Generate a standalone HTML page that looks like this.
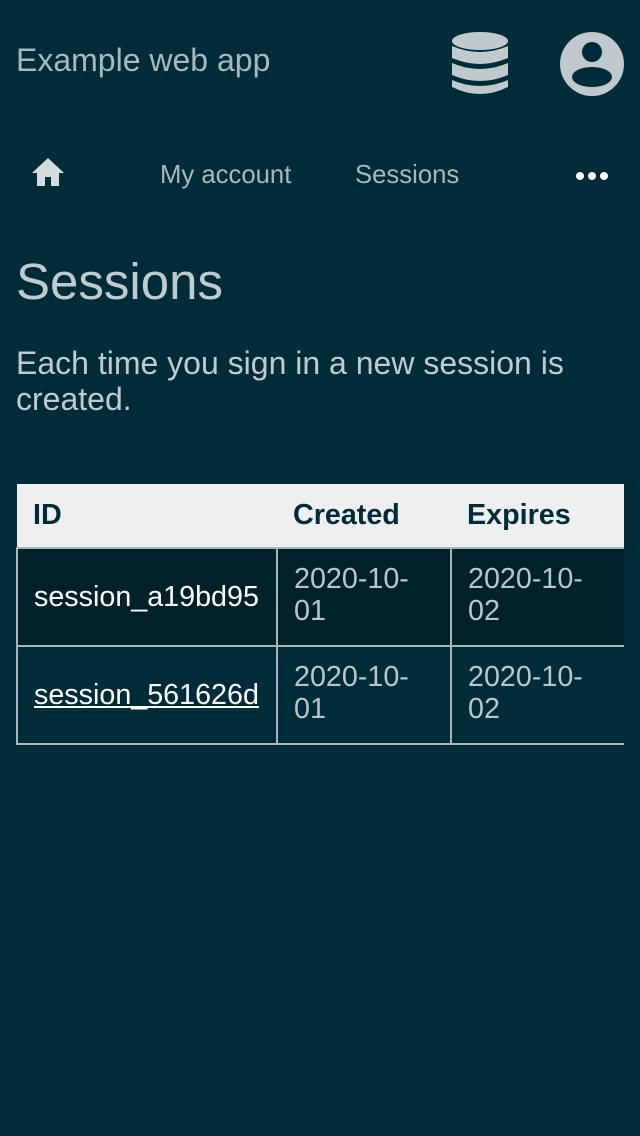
<!DOCTYPE html>
<html><head><meta charset="utf-8"><style>
body{margin:0;width:640px;height:1136px;background:#002b38;font-family:"Liberation Sans",sans-serif;color:#b9c6ca;position:relative;overflow:hidden}
.a{position:absolute;white-space:nowrap}
table{position:absolute;left:16px;top:484px;width:608px;border-collapse:collapse;font-size:28.7px}
th{background:#efefef;color:#002b38;text-align:left;height:64px;padding:0 16px;font-weight:bold;box-sizing:border-box}
td{border:2px solid #a9b5b9;padding:14px 16px;vertical-align:top;line-height:32px;height:98px;box-sizing:border-box;white-space:normal}
td:first-child{border-left:2px solid #a9b5b9;vertical-align:middle;color:#fff}
td:last-child{border-right:none}
tr.r1 td{background:#00202a}
tr.r2 td{background:#002b38}
</style></head><body>
<div class="a" style="left:16px;top:42px;font-size:32px;color:#a9b8bd">Example web app</div>
<svg class="a" style="left:452px;top:32px" width="56" height="64" viewBox="0 0 56 64">
<ellipse cx="28" cy="9" rx="28" ry="9" fill="#c0cacd"/>
<path d="M0 14 Q28 26 56 14 V26 Q28 38 0 26Z" fill="#c0cacd"/>
<path d="M0 31 Q28 43 56 31 V43 Q28 55 0 43Z" fill="#c0cacd"/>
<path d="M0 48 Q28 60 56 48 V55 Q28 69 0 55Z" fill="#c0cacd"/>
</svg>
<svg class="a" style="left:560px;top:32px" width="64" height="64" viewBox="0 0 64 64">
<circle cx="32" cy="32" r="32" fill="#c0cacd"/>
<circle cx="32" cy="20" r="10" fill="#002b38"/>
<ellipse cx="32" cy="45" rx="20" ry="10" fill="#002b38"/>
</svg>
<svg class="a" style="left:32px;top:158px" width="32" height="28" viewBox="0 0 32 28">
<path d="M16 0 L32 15 H27 V28 H19 V19 H13 V28 H5 V15 H0Z" fill="#d4dcde"/>
</svg>
<div class="a" style="left:160px;top:161px;font-size:25.7px;color:#a9b8bd">My account</div>
<div class="a" style="left:355px;top:161px;font-size:25.7px;color:#a9b8bd">Sessions</div>
<svg class="a" style="left:575px;top:169px" width="34" height="14"><circle cx="5" cy="7" r="4" fill="#fff"/><circle cx="17" cy="7" r="4" fill="#fff"/><circle cx="29" cy="7" r="4" fill="#fff"/></svg>
<div class="a" style="left:16px;top:252px;font-size:51px;color:#c0cbcf">Sessions</div>
<div class="a" style="left:16px;top:345px;font-size:32px;line-height:36px;color:#c0cbcf">Each time you sign in a new session is<br>created.</div>
<table>
<tr><th style="width:260px">ID</th><th style="width:174px">Created</th><th>Expires</th></tr>
<tr class="r1"><td>session_a19bd95</td><td>2020-10-<br>01</td><td>2020-10-<br>02</td></tr>
<tr class="r2"><td><u>session_561626d</u></td><td>2020-10-<br>01</td><td>2020-10-<br>02</td></tr>
</table>
</body></html>
